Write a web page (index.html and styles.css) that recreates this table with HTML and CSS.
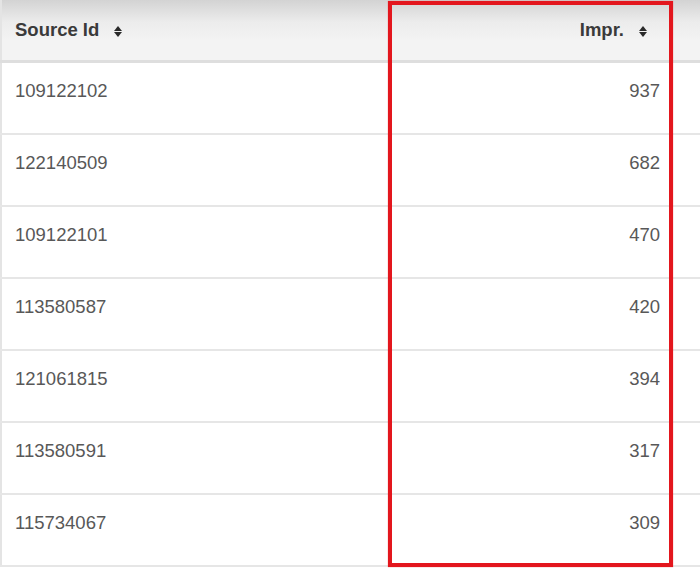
FILE: index.html
```html
<!DOCTYPE html>
<html>
<head>
  <meta charset="UTF-8">
  <title>Sources</title>
  <link rel="stylesheet" href="styles.css">
</head>
<body>
  <div class="report">
    <table class="data-table">
      <colgroup>
        <col class="col-source">
        <col class="col-impr">
        <col>
      </colgroup>
      <thead>
        <tr>
          <th class="th-left">Source Id<span class="sort-icon"></span></th>
          <th class="th-right">Impr.<span class="sort-icon"></span></th>
          <th></th>
        </tr>
      </thead>
      <tbody>
        <tr><td>109122102</td><td class="num">937</td><td></td></tr>
        <tr><td>122140509</td><td class="num">682</td><td></td></tr>
        <tr><td>109122101</td><td class="num">470</td><td></td></tr>
        <tr><td>113580587</td><td class="num">420</td><td></td></tr>
        <tr><td>121061815</td><td class="num">394</td><td></td></tr>
        <tr><td>113580591</td><td class="num">317</td><td></td></tr>
        <tr><td>115734067</td><td class="num">309</td><td></td></tr>
      </tbody>
    </table>
    <div class="highlight"></div>
  </div>
</body>
</html>
```

FILE: styles.css
```css
* {
  box-sizing: border-box;
  margin: 0;
  padding: 0;
}

html, body {
  height: 100vh;
  overflow: hidden;
  background: #ffffff;
}

body {
  font-family: 'Liberation Sans', Arial, sans-serif;
  font-size: 18.5px;
  line-height: 26px;
  color: #585858;
}

.report {
  position: relative;
  width: 700px;
}

.data-table {
  width: 700px;
  table-layout: fixed;
  border-collapse: collapse;
  border-left: 2px solid #e4e4e4;
}

.col-source {
  width: 390px;
}

.col-impr {
  width: 282px;
}

.data-table th {
  height: 61px;
  padding: 17px 0 16px 13px;
  font-weight: bold;
  color: #3a3a3a;
  text-align: left;
  white-space: nowrap;
  background: linear-gradient(to bottom, #d3d3d3 0px, #ececec 22px, #f3f3f3 40px, #f3f3f3 100%);
  border-bottom: 3px solid #dedede;
}

.data-table th.th-right {
  text-align: right;
  padding-right: 26px;
}

.sort-icon {
  display: inline-block;
  position: relative;
  width: 8px;
  height: 11px;
  margin-left: 15px;
  vertical-align: -1px;
}

.sort-icon:before,
.sort-icon:after {
  content: '';
  position: absolute;
  left: 0;
  border-left: 4px solid transparent;
  border-right: 4px solid transparent;
}

.sort-icon:before {
  top: 0;
  border-bottom: 5px solid #2a2a2a;
}

.sort-icon:after {
  bottom: 0;
  border-top: 5px solid #2a2a2a;
}

.data-table td {
  height: 72px;
  padding: 15px 13px 29px 13px;
  vertical-align: top;
  border-bottom: 2px solid #e6e6e6;
}

.data-table td.num {
  text-align: right;
}

.highlight {
  position: absolute;
  left: 388px;
  top: 1px;
  width: 285px;
  height: 566px;
  border: 4px solid #e3161d;
  box-shadow: 0 0 1px rgb(227 22 29 / 0.6);
}
```
